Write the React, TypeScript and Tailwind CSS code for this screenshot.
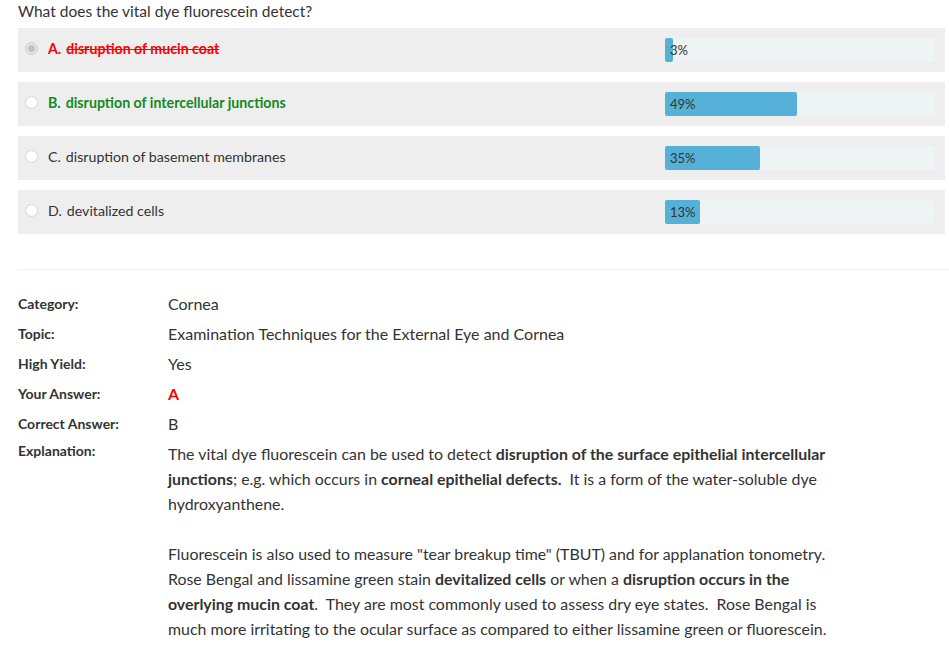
import React from 'react';

const options = [
  { key: 'A', text: 'disruption of mucin coat', pct: 3, state: 'wrong' },
  { key: 'B', text: 'disruption of intercellular junctions', pct: 49, state: 'correct' },
  { key: 'C', text: 'disruption of basement membranes', pct: 35, state: 'none' },
  { key: 'D', text: 'devitalized cells', pct: 13, state: 'none' },
];

const Radio = ({ checked }: { checked: boolean }) => (
  <span
    className={`w-[13px] h-[13px] rounded-full border flex items-center justify-center shrink-0 ${
      checked ? 'border-[#cfcfcf] bg-[#e4e4e4]' : 'border-[#d6d6d6] bg-white'
    }`}
  >
    {checked && <span className="w-[7px] h-[7px] rounded-full bg-[#c2c2c2]" />}
  </span>
);

export default function App() {
  return (
    <div className="bg-white min-h-[648px] text-[#333] font-['Lato','Liberation_Sans',sans-serif] pl-[18px] pt-[1px]">
      <h1 className="text-[15.5px] leading-[20px] mb-[7px]">What does the vital dye fluorescein detect?</h1>

      <div className="flex flex-col gap-[10px] w-[927px]">
        {options.map(o => (
          <div key={o.key} className="h-[44px] bg-[#eeeeee] flex items-center">
            <div className="flex items-center flex-1 pl-[7px] gap-[10px] pb-[2px]">
              <Radio checked={o.state === 'wrong'} />
              <span
                className={`text-[14.2px] ${
                  o.state === 'wrong'
                    ? 'text-[#ff0000] font-bold'
                    : o.state === 'correct'
                    ? 'text-[#138a22] font-bold'
                    : 'text-[#333]'
                }`}
              >
                {o.key}.
                <span className={`ml-[5px] ${o.state === 'wrong' ? 'line-through' : ''}`}>{o.text}</span>
              </span>
            </div>
            <div className="w-[270px] h-[24px] mr-[10px] bg-[#eef3f3] rounded-[2px]">
              <div
                className="h-full bg-[#55b1d7] rounded-[2px] text-[13px] leading-[24px] pl-[5px] whitespace-nowrap"
                style={{ width: `${o.pct}%` }}
              >
                {o.pct}%
              </div>
            </div>
          </div>
        ))}
      </div>

      <div className="h-px bg-[#eeeeee] mt-[35px] mb-[19px]" />

      <div className="text-[16px]">
        {[
          ['Category:', 'Cornea'],
          ['Topic:', 'Examination Techniques for the External Eye and Cornea'],
          ['High Yield:', 'Yes'],
          ['Your Answer:', 'A'],
          ['Correct Answer:', 'B'],
        ].map(([label, value]) => (
          <div key={label} className="flex h-[30px] items-center">
            <div className="w-[150px] text-[14px] font-bold -mt-[2px]">{label}</div>
            <div className={label === 'Your Answer:' ? 'text-[#ff0000] font-bold' : ''}>{value}</div>
          </div>
        ))}
        <div className="flex">
          <div className="w-[150px] text-[14px] font-bold pt-[1px] shrink-0">Explanation:</div>
          <div className="w-[662px] leading-[25px] pt-[2px] text-[15.9px]">
            <p>
              The vital dye fluorescein can be used to detect{' '}
              <b>disruption of the surface epithelial intercellular junctions</b>; e.g. which occurs in{' '}
              <b>corneal epithelial defects.</b>&nbsp; It is a form of the water-soluble dye hydroxyanthene.
            </p>
            <p className="mt-[25px]">
              Fluorescein is also used to measure "tear breakup time" (TBUT) and for applanation tonometry.
              Rose Bengal and lissamine green stain <b>devitalized cells</b> or when a{' '}
              <b>disruption occurs in the overlying mucin coat</b>.&nbsp; They are most commonly used to assess dry
              eye states.&nbsp; Rose Bengal is much more irritating to the ocular surface as compared to either
              lissamine green or fluorescein.
            </p>
          </div>
        </div>
      </div>
    </div>
  );
}
